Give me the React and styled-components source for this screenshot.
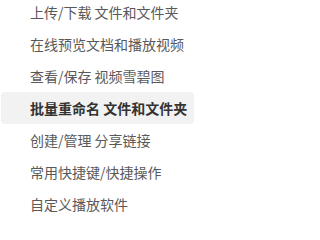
import React from "react";
import styled, { createGlobalStyle } from "styled-components";

const GlobalStyle = createGlobalStyle`
  body {
    margin: 0;
    background: #ffffff;
    font-family: "Noto Sans CJK SC", "Noto Sans", sans-serif;
  }
`;

const MenuList = styled.ul`
  list-style: none;
  margin: -4px 0 0 1px;
  padding: 0;
  width: 193px;
`;

const MenuItem = styled.li`
  height: 32px;
  line-height: 32px;
  padding-left: 29px;
  border-radius: 4px;
  font-size: 14px;
  white-space: nowrap;
  color: ${(p) => (p.active ? "#333333" : "#595959")};
  font-weight: ${(p) => (p.active ? 700 : 400)};
  background: ${(p) => (p.active ? "#f2f2f2" : "transparent")};
`;

const items = [
  "上传/下载 文件和文件夹",
  "在线预览文档和播放视频",
  "查看/保存 视频雪碧图",
  "批量重命名 文件和文件夹",
  "创建/管理 分享链接",
  "常用快捷键/快捷操作",
  "自定义播放软件",
];

export default function App() {
  return (
    <>
      <GlobalStyle />
      <MenuList>
        {items.map((text, i) => (
          <MenuItem key={text} active={i === 3}>
            {text}
          </MenuItem>
        ))}
      </MenuList>
    </>
  );
}
